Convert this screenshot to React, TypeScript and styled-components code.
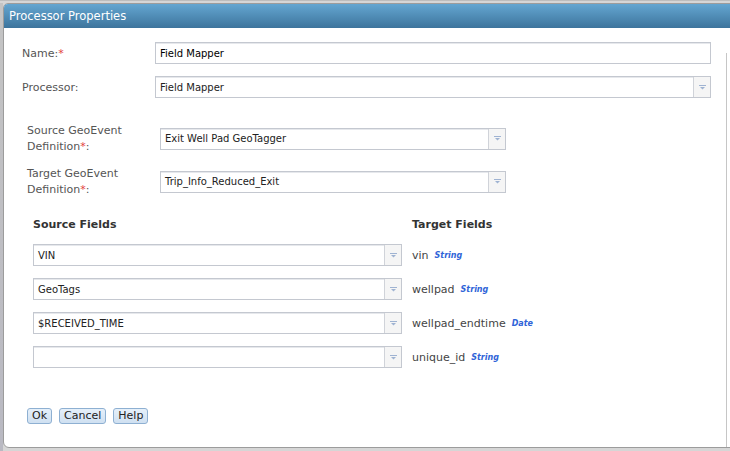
import styled, { createGlobalStyle } from 'styled-components'

const GlobalStyle = createGlobalStyle`
  html, body {
    margin: 0;
    padding: 0;
    background: #cfcfcf;
  }
  body {
    font-family: "DejaVu Sans", Verdana, sans-serif;
  }
`

type FieldRow = {
  source: string
  target: string
  type: string
}

const fieldRows: FieldRow[] = [
  { source: 'VIN', target: 'vin', type: 'String' },
  { source: 'GeoTags', target: 'wellpad', type: 'String' },
  { source: '$RECEIVED_TIME', target: 'wellpad_endtime', type: 'Date' },
  { source: '', target: 'unique_id', type: 'String' },
]

const Arrow = () => (
  <svg width="7" height="5" viewBox="0 0 7 5">
    <rect x="0" y="0" width="7" height="1" fill="#9fb3d2" />
    <polygon points="1,2 6,2 3.5,4.5" fill="#9fb3d2" />
  </svg>
)

type SelectProps = {
  value: string
  width: number
}

const Select = ({ value, width }: SelectProps) => (
  <SelectBox $width={width}>
    <SelectText>{value}</SelectText>
    <ArrowButton>
      <Arrow />
    </ArrowButton>
  </SelectBox>
)

export default function App() {
  return (
    <Page>
      <GlobalStyle />
      <Backdrop />
      <Dialog>
        <TitleBar>Processor Properties</TitleBar>
        <Body>
          <Form>
            <TopRow>
              <TopLabel>
                Name:<Required>*</Required>
              </TopLabel>
              <TextInput>Field Mapper</TextInput>
            </TopRow>
            <TopRow>
              <TopLabel>Processor:</TopLabel>
              <Select value="Field Mapper" width={556} />
            </TopRow>

            <DefRows>
              <DefRow>
                <DefLabel>
                  Source GeoEvent
                  <br />
                  Definition<Required>*</Required>:
                </DefLabel>
                <Select value="Exit Well Pad GeoTagger" width={346} />
              </DefRow>
              <DefRow>
                <DefLabel>
                  Target GeoEvent
                  <br />
                  Definition<Required>*</Required>:
                </DefLabel>
                <Select value="Trip_Info_Reduced_Exit" width={346} />
              </DefRow>
            </DefRows>

            <FieldGrid>
              <FieldHeader>Source Fields</FieldHeader>
              <FieldHeader>Target Fields</FieldHeader>
              {fieldRows.map((row) => (
                <FieldLine key={row.target}>
                  <Select value={row.source} width={369} />
                  <TargetName>
                    {row.target}
                    <TypeTag>{row.type}</TypeTag>
                  </TargetName>
                </FieldLine>
              ))}
            </FieldGrid>

            <Buttons>
              <Button>Ok</Button>
              <Button>Cancel</Button>
              <Button>Help</Button>
            </Buttons>
          </Form>
          <ScrollEdge />
        </Body>
      </Dialog>
    </Page>
  )
}

const Page = styled.div`
  width: 730px;
  height: 451px;
  overflow: hidden;
  display: flex;
  padding-top: 2px;
  box-sizing: border-box;
  background: #d6d6d6;
  border-top: 1px solid #bdbdbd;
`

const Backdrop = styled.div`
  width: 3px;
  flex-shrink: 0;
  background: linear-gradient(#c4c4c4, #b9b9c2);
`

const Dialog = styled.div`
  width: 740px;
  height: 445px;
  flex-shrink: 0;
  display: flex;
  flex-direction: column;
  background: #fff;
  border: 1px solid #9c9c9c;
  border-radius: 5px 0 0 6px;
  overflow: hidden;
  box-sizing: border-box;
`

const TitleBar = styled.div`
  height: 24px;
  flex-shrink: 0;
  display: flex;
  align-items: center;
  padding-left: 5px;
  color: #fff;
  font-size: 11.5px;
  background: linear-gradient(#64a6d1, #3d749c);
`

const Body = styled.div`
  flex: 1;
  display: flex;
`

const Form = styled.div`
  width: 722px;
  flex-shrink: 0;
  padding: 14px 0 0 18px;
  box-sizing: border-box;
`

const ScrollEdge = styled.div`
  margin-top: 25px;
  border-left: 1px solid #c6c6c6;
`

const TopRow = styled.div`
  display: flex;
  align-items: center;
  height: 22px;
  margin-bottom: 12px;
`

const TopLabel = styled.div`
  width: 133px;
  color: #555;
  font-size: 11px;
`

const Required = styled.span`
  color: #e23b3b;
`

const inputBase = `
  height: 22px;
  box-sizing: border-box;
  border: 1px solid #c4c8d0;
  box-shadow: inset 0 1px 0 #e6e8ec;
  background: #fff;
  font-size: 10px;
`

const TextInput = styled.div`
  ${inputBase}
  width: 556px;
  padding: 0 4px;
  display: flex;
  align-items: center;
  color: #000;
`

const SelectBox = styled.div<{ $width: number }>`
  ${inputBase}
  width: ${({ $width }) => $width}px;
  display: flex;
  align-items: stretch;
`

const SelectText = styled.div`
  flex: 1;
  display: flex;
  align-items: center;
  padding: 0 4px;
  color: #222;
  white-space: nowrap;
`

const ArrowButton = styled.div`
  width: 16px;
  display: flex;
  align-items: center;
  justify-content: center;
  border-left: 1px solid #d0d3d9;
  background: #f5f5f5;
`

const DefRows = styled.div`
  margin-top: 29px;
  padding-left: 5px;
  display: flex;
  flex-direction: column;
  gap: 20px;
`

const DefRow = styled.div`
  display: flex;
  align-items: center;
  height: 23px;
`

const DefLabel = styled.div`
  width: 133px;
  color: #555;
  font-size: 11px;
  line-height: 16px;
`

const FieldGrid = styled.div`
  margin-top: 25px;
  padding-left: 11px;
  display: grid;
  grid-template-columns: 379px 1fr;
  row-gap: 12px;
`

const FieldHeader = styled.div`
  font-size: 11px;
  font-weight: bold;
  color: #333;
  margin-bottom: 1px;
`

const FieldLine = styled.div`
  display: contents;
`

const TargetName = styled.div`
  display: flex;
  align-items: center;
  color: #444;
  font-size: 11px;
`

const TypeTag = styled.span`
  margin-left: 6px;
  color: #2f64d8;
  font-size: 8px;
  font-style: italic;
  font-weight: bold;
`

const Buttons = styled.div`
  margin-top: 40px;
  padding-left: 5px;
  display: flex;
  gap: 7px;
`

const Button = styled.button`
  height: 16px;
  padding: 0 4px;
  font-family: inherit;
  font-size: 11px;
  color: #222;
  background: linear-gradient(#e6f0fa, #cfe0f1);
  border: 1px solid #8eb0d2;
  border-radius: 3px;
  line-height: 14px;
  cursor: pointer;
`
